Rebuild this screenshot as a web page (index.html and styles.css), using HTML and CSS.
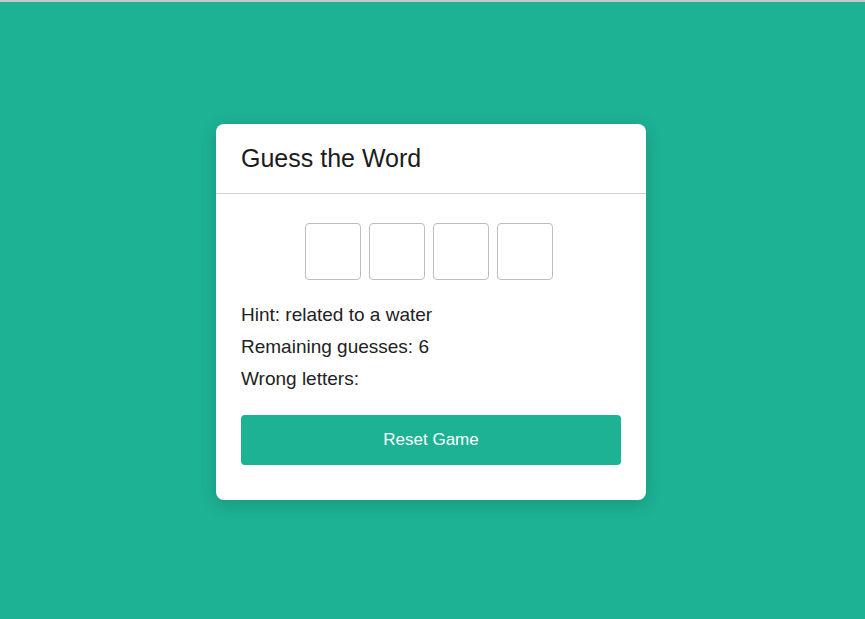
FILE: index.html
```html
<!DOCTYPE html>
<html>
<head>
<meta charset="utf-8">
<title>Guess the Word</title>
<link rel="stylesheet" href="styles.css">
</head>
<body>
<div class="page">
  <div class="card">
    <div class="card-header">
      <h1 class="title">Guess the Word</h1>
    </div>
    <div class="card-body">
      <div class="slots">
        <div class="slot"></div>
        <div class="slot"></div>
        <div class="slot"></div>
        <div class="slot"></div>
      </div>
      <div class="info">
        <p class="line">Hint: related to a water</p>
        <p class="line">Remaining guesses: 6</p>
        <p class="line">Wrong letters: </p>
      </div>
      <button class="reset">Reset Game</button>
    </div>
  </div>
</div>
</body>
</html>
```
FILE: styles.css
```css
* { box-sizing: border-box; }
html, body {
  margin: 0;
  padding: 0;
  height: 100%;
}
body {
  background: #1db294;
  border-top: 2px solid #c9c9c9;
  font-family: "Liberation Sans", Arial, sans-serif;
  color: #222;
}
.page {
  height: 100%;
  display: flex;
  align-items: center;
  justify-content: center;
  padding: 3px 3px 0 0;
}
.card {
  width: 430px;
  background: #fff;
  border-radius: 8px;
  box-shadow: 0 4px 18px rgba(0, 0, 0, 0.16);
}
.card-header {
  padding: 20px 25px;
  border-bottom: 1px solid #cfcfcf;
}
.title {
  margin: 0;
  font-size: 25px;
  line-height: 29px;
  font-weight: normal;
  color: #1c1c1c;
}
.card-body {
  padding: 29px 25px 35px;
}
.slots {
  display: flex;
  justify-content: center;
  gap: 8px;
  padding-right: 5px;
}
.slot {
  width: 56px;
  height: 57px;
  border: 1px solid #bdbdbd;
  border-radius: 4px;
}
.info {
  margin-top: 23px;
  display: flex;
  flex-direction: column;
  gap: 8px;
}
.line {
  margin: 0;
  font-size: 19px;
  line-height: 24px;
  color: #222;
}
.reset {
  display: block;
  width: 100%;
  height: 50px;
  margin-top: 24px;
  border: none;
  border-radius: 4px;
  background: #1db294;
  color: #fff;
  font-family: "Liberation Sans", Arial, sans-serif;
  font-size: 17px;
  cursor: pointer;
}
```
